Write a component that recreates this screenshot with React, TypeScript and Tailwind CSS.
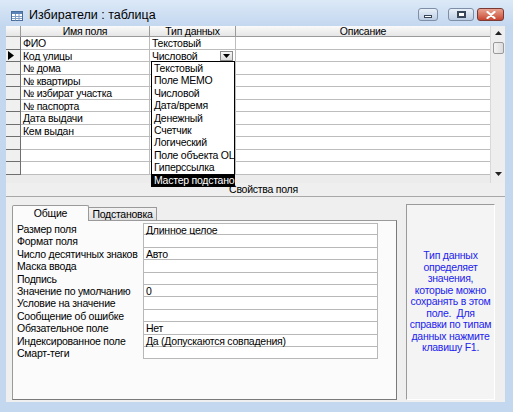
import React from "react";

const fieldRows = [
  ["ФИО", "Текстовый"],
  ["Код улицы", "Числовой"],
  ["№ дома", ""],
  ["№ квартиры", ""],
  ["№ избират участка", ""],
  ["№ паспорта", ""],
  ["Дата выдачи", ""],
  ["Кем выдан", ""],
  ["", ""],
  ["", ""],
  ["", ""],
];

const typeOptions = [
  "Текстовый",
  "Поле MEMO",
  "Числовой",
  "Дата/время",
  "Денежный",
  "Счетчик",
  "Логический",
  "Поле объекта OL",
  "Гиперссылка",
  "Мастер подстано",
];

const props = [
  ["Размер поля", "Длинное целое"],
  ["Формат поля", ""],
  ["Число десятичных знаков", "Авто"],
  ["Маска ввода", ""],
  ["Подпись", ""],
  ["Значение по умолчанию", "0"],
  ["Условие на значение", ""],
  ["Сообщение об ошибке", ""],
  ["Обязательное поле", "Нет"],
  ["Индексированное поле", "Да (Допускаются совпадения)"],
  ["Смарт-теги", ""],
];

const helpLines = [
  "Тип данных",
  "определяет",
  "значения,",
  "которые можно",
  "сохранять в этом",
  "поле.  Для",
  "справки по типам",
  "данных нажмите",
  "клавишу F1.",
];

function TableIcon() {
  return (
    <svg width="12" height="10" viewBox="0 0 12 10">
      <rect x="0.5" y="0.5" width="11" height="9" fill="#fff" stroke="#4a6e9c" />
      <rect x="1" y="1" width="10" height="2" fill="#5b83b8" />
      <path d="M1 5.5H11M1 7.5H11M4.5 3V9.5M8 3V9.5" stroke="#7f9cc4" strokeWidth="1" />
    </svg>
  );
}

function WindowButtons() {
  return (
    <div className="flex items-start gap-[3px] pt-[8px]">
      <div className="w-[20px] h-[13px] rounded-[3px] border border-[#7d8ea6] bg-gradient-to-b from-[#e9f0f8] to-[#bccde3] flex items-center justify-center">
        <div className="w-[8px] h-[3px] mt-[4px] bg-white border border-[#39465a]" />
      </div>
      <div className="w-[26px] h-[13px] ml-[7px] rounded-[3px] border border-[#7d8ea6] bg-gradient-to-b from-[#e9f0f8] to-[#bccde3] flex items-center justify-center">
        <div className="w-[9px] h-[7px] border-[2px] border-[#39465a] bg-white" />
      </div>
      <div className="w-[27px] h-[13px] rounded-[3px] border border-[#7a3a33] bg-gradient-to-b from-[#e9a391] to-[#c6452f] flex items-center justify-center">
        <svg width="10" height="8" viewBox="0 0 10 8">
          <path d="M1.5 1L8.5 7M8.5 1L1.5 7" stroke="#fff" strokeWidth="2.2" strokeLinecap="round" />
        </svg>
      </div>
    </div>
  );
}

function Scrollbar() {
  return (
    <div className="w-[15px] bg-[#eeeeee] border-l border-[#d8d8d8] flex flex-col items-center">
      <div className="h-[14px] w-full flex items-center justify-center">
        <svg width="7" height="4" viewBox="0 0 7 4">
          <path d="M0 4L3.5 0L7 4Z" fill="#222" />
        </svg>
      </div>
      <div className="w-[11px] h-[12px] mt-[2px] rounded-[2px] border border-[#9a9a9a] bg-gradient-to-r from-[#f4f4f4] to-[#dcdcdc]" />
      <div className="flex-1" />
      <div className="h-[14px] w-full flex items-center justify-center mb-[2px]">
        <svg width="7" height="4" viewBox="0 0 7 4">
          <path d="M0 0L7 0L3.5 4Z" fill="#222" />
        </svg>
      </div>
    </div>
  );
}

function FieldGrid() {
  return (
    <div className="relative flex h-[157px]">
      <div className="flex-1 flex flex-col bg-[#ececec]">
        {/* header */}
        <div className="flex h-[11px] leading-[10px] bg-gradient-to-b from-[#fafafa] to-[#e6e6e6] border-b border-[#9a9a9a]">
          <div className="w-[15px] border-r border-[#9a9a9a]" />
          <div className="w-[129px] border-r border-[#9a9a9a] text-center">Имя поля</div>
          <div className="w-[86px] border-r border-[#9a9a9a] text-center">Тип данных</div>
          <div className="flex-1 text-center">Описание</div>
        </div>
        {fieldRows.map(([name, type], i) => (
          <div key={i} className="flex h-[12.5px] leading-[12px]">
            <div className="w-[15px] bg-[#f0f0f0] border-r border-b border-[#6f6f6f] flex items-center pl-[2px]">
              {i === 1 && (
                <svg width="6" height="9" viewBox="0 0 6 9">
                  <path d="M0 0L6 4.5L0 9Z" fill="#000" />
                </svg>
              )}
            </div>
            <div className="w-[129px] bg-white border-r border-b border-[#bdbdbd] pl-[2px] whitespace-nowrap overflow-hidden">
              {name}
            </div>
            <div className="w-[86px] bg-white border-r border-b border-[#bdbdbd] pl-[2px] whitespace-nowrap relative">
              {type}
              {i === 1 && (
                <div className="absolute right-[2px] top-[1px] w-[13px] h-[10px] border border-[#8a8a8a] bg-gradient-to-b from-[#f6f6f6] to-[#dadada] flex items-center justify-center">
                  <svg width="7" height="4" viewBox="0 0 7 4">
                    <path d="M0 0L7 0L3.5 4Z" fill="#000" />
                  </svg>
                </div>
              )}
            </div>
            <div className="flex-1 bg-white border-b border-[#bdbdbd]" />
          </div>
        ))}
      </div>
      <Scrollbar />

      {/* opened type list */}
      <div className="absolute left-[145px] top-[35px] w-[84px] bg-white border border-black flex flex-col">
        {typeOptions.map((opt, i) => (
          <div
            key={opt}
            className={`h-[12.4px] leading-[12.4px] pl-[2px] whitespace-nowrap ${
              i === typeOptions.length - 1 ? "bg-black text-white" : ""
            }`}
          >
            {opt}
          </div>
        ))}
      </div>
    </div>
  );
}

function Properties() {
  return (
    <div className="flex-1 flex pl-[6px] pr-[10px] pt-[7px] pb-[2px] gap-[9px]">
      <div className="w-[385px] flex flex-col">
        {/* tabs */}
        <div className="flex items-end h-[16px]">
          <div className="w-[77px] h-[16px] bg-[#fbfbfb] border-t border-l border-r border-[#9a9a9a] rounded-t-[2px] text-center leading-[14px] relative z-10 -mb-[1px]">
            Общие
          </div>
          <div className="w-[68px] h-[13px] bg-gradient-to-b from-[#f2f2f2] to-[#e0e0e0] border-t border-r border-[#9a9a9a] text-center leading-[12px]">
            Подстановка
          </div>
        </div>
        {/* panel */}
        <div className="flex-1 bg-[#fbfbfb] border border-[#9a9a9a] border-r-[#7a7a7a] border-b-[#7a7a7a] pt-[2px] pr-[18px]">
          {props.map(([label, value], i) => (
            <div key={i} className="flex h-[12.4px] leading-[12px]">
              <div className="w-[130px] pl-[4px] whitespace-nowrap">{label}</div>
              <div
                className={`flex-1 bg-white border-l border-r border-b border-[#b8b8b8] pl-[2px] whitespace-nowrap ${
                  i === 0 ? "border-t" : ""
                }`}
              >
                {value}
              </div>
            </div>
          ))}
        </div>
      </div>
      {/* help */}
      <div className="w-[89px] bg-[#f4f4f4] border-l border-t border-[#9a9a9a] border-r border-r-white border-b border-b-white flex flex-col items-center justify-center text-[#2323ee] text-center">
        {helpLines.map((l) => (
          <div key={l} className="leading-[11.5px] whitespace-pre">
            {l}
          </div>
        ))}
      </div>
    </div>
  );
}

export default function App() {
  return (
    <div className="w-[513px] h-[412px] bg-[#c3d7ef] flex flex-col overflow-hidden text-[10.5px] tracking-[-0.25px] text-black font-['Liberation_Sans',_Arial,_sans-serif]">
      {/* title bar */}
      <div className="h-[26px] flex items-start pl-[11px] pr-[9px] bg-gradient-to-b from-[#dce9f7] to-[#c3d7ef]">
        <div className="pt-[11px]">
          <TableIcon />
        </div>
        <div className="pl-[6px] pt-[7px] text-[12.5px] tracking-normal leading-[16px] text-black">Избиратели : таблица</div>
        <div className="flex-1" />
        <WindowButtons />
      </div>
      <div className="flex-1 ml-[6px] mr-[8px] mb-[10px] bg-[#efefef] flex flex-col">
        <FieldGrid />
        <div className="h-[13px] leading-[12px] flex justify-center pl-[16px]">Свойства поля</div>
        <div className="h-[1px] bg-[#a8a8a8]" />
        <Properties />
      </div>
    </div>
  );
}
